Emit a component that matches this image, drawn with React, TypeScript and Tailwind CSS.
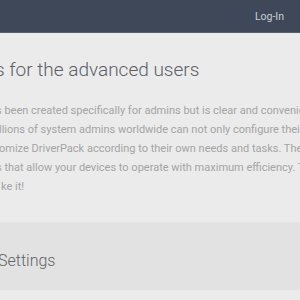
import React from 'react';

const lines = [
  { text: 's been created specifically for admins but is clear and convenient', shift: '-ml-[4px]' },
  { text: 'llions of system admins worldwide can not only configure their computers', shift: '-ml-[1px]' },
  { text: 'omize DriverPack according to their own needs and tasks. The most', shift: '-ml-[1px]' },
  { text: 's that allow your devices to operate with maximum efficiency. Try', shift: '-ml-[4px]' },
  { text: 'ke it!', shift: 'ml-[1px]' },
];

const App: React.FC = () => {
  return (
    <div className="w-[300px] h-[300px] overflow-hidden bg-[#ebebeb] font-['Roboto',sans-serif]">
      <header className="h-[33px] bg-[#3e4858] border-b border-[#56606e] flex items-center justify-end pr-[16px]">
        <span className="text-[10.5px] text-[#c9ced6] pt-[2px]">Log-In</span>
      </header>

      <section className="pt-[23px]">
        <h2 className="whitespace-nowrap -ml-[5px] text-[19px] font-light leading-[28px] text-[#5b6067]">
          s for the advanced users
        </h2>
        <div className="mt-[17px] text-[11px] leading-[19px] text-[#a4a4a4]">
          {lines.map((l) => (
            <p key={l.text} className={`whitespace-nowrap ${l.shift}`}>
              {l.text}
            </p>
          ))}
        </div>
      </section>

      <section className="mt-[26px] h-[68px] bg-[#e2e2e2] border-t border-[#e6e6e6] flex items-center">
        <h3 className="whitespace-nowrap -ml-[2px] text-[16px] font-light text-[#5f6368] pt-[8px]">Settings</h3>
      </section>
    </div>
  );
};

export default App;
